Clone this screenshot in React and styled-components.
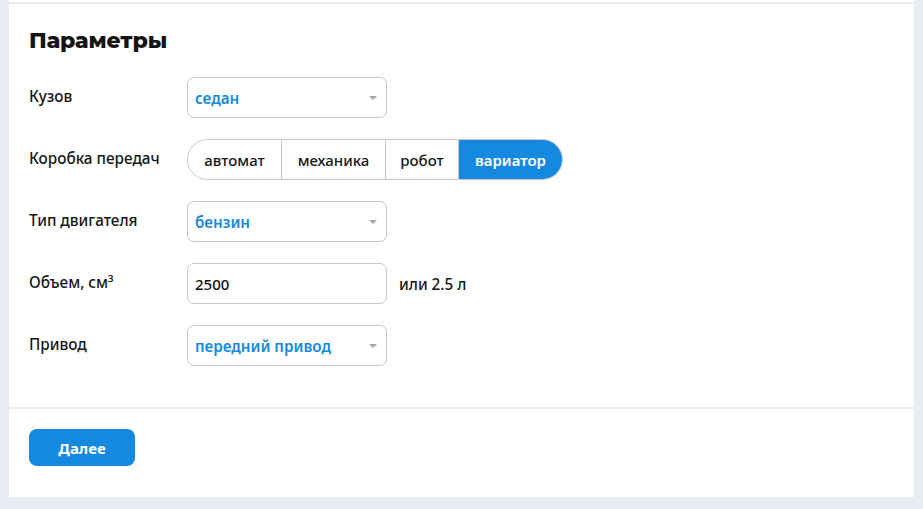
import React from "react";
import styled, { createGlobalStyle } from "styled-components";

const Global = createGlobalStyle`
  html, body { margin: 0; padding: 0; background: #e8edf4; }
  * { box-sizing: border-box; }
  body { font-family: "Noto Sans", "Open Sans", sans-serif; color: #1b1b1b; }
`;

const BLUE = "#1589e0";
const BORDER = "#c3c6cb";

const Page = styled.div`
  padding: 0 9px 12px 9px;
`;

const Panel = styled.div`
  background: #fff;
  padding-top: 2px;
`;

const Section = styled.section`
  border-top: 2px solid #e8edf4;
  padding: ${(p) => p.$pad};
`;

const Title = styled.h2`
  margin: 0 0 21px 0;
  font-family: "Montserrat", "Inter", sans-serif;
  font-weight: 800;
  font-size: 22px;
  line-height: 30px;
  letter-spacing: -0.1px;
  color: #141414;
`;

const Form = styled.div`
  display: flex;
  flex-direction: column;
  gap: 21px;
`;

const Row = styled.div`
  display: grid;
  grid-template-columns: 158px auto 1fr;
  align-items: center;
  height: 41px;
`;

const Label = styled.div`
  font-size: 15.3px;
  font-weight: 500;
  line-height: 20px;
  margin-top: -3px;
  color: #161616;
`;

const Select = styled.div`
  width: 200px;
  height: 41px;
  border: 1px solid ${BORDER};
  border-radius: 7px;
  display: flex;
  align-items: center;
  justify-content: space-between;
  padding: 0 8px 0 7px;
  font-size: 15.2px;
  font-weight: 600;
  color: ${BLUE};
`;

const Arrow = styled.span`
  width: 0;
  height: 0;
  border-left: 4px solid transparent;
  border-right: 4px solid transparent;
  border-top: 4px solid #a3a7ac;
  margin-right: 1px;
`;

const Input = styled.div`
  width: 200px;
  height: 41px;
  border: 1px solid ${BORDER};
  border-radius: 7px;
  display: flex;
  align-items: center;
  padding: 0 7px;
  font-size: 15px;
  font-weight: 500;
  color: #111;
`;

const Hint = styled.div`
  margin-left: 12px;
  font-size: 15.3px;
  font-weight: 500;
  color: #161616;
`;

const Segmented = styled.div`
  display: flex;
  height: 41px;
  border: 1px solid ${BORDER};
  border-radius: 21px;
  overflow: hidden;
`;

const Segment = styled.div`
  display: flex;
  align-items: center;
  justify-content: center;
  width: ${(p) => p.$w}px;
  font-size: 15px;
  font-weight: ${(p) => (p.$active ? 600 : 500)};
  color: ${(p) => (p.$active ? "#fff" : "#161616")};
  background: ${(p) => (p.$active ? BLUE : "#fff")};
  border-left: ${(p) => (p.$first ? "none" : `1px solid ${BORDER}`)};
`;

const Button = styled.button`
  width: 106px;
  height: 37px;
  border: none;
  border-radius: 8px;
  background: ${BLUE};
  color: #fff;
  font-family: "Noto Sans", "Open Sans", sans-serif;
  font-size: 15px;
  font-weight: 700;
  cursor: pointer;
`;

const gears = [
  { t: "автомат", w: 93 },
  { t: "механика", w: 104 },
  { t: "робот", w: 73 },
  { t: "вариатор", w: 104, active: true },
];

export default function App() {
  return (
    <>
      <Global />
      <Page>
        <Panel>
          <Section $pad="22px 20px 41px 20px">
            <Title>Параметры</Title>
            <Form>
              <Row>
                <Label>Кузов</Label>
                <Select>
                  седан
                  <Arrow />
                </Select>
              </Row>
              <Row>
                <Label>Коробка передач</Label>
                <Segmented>
                  {gears.map((g, i) => (
                    <Segment key={g.t} $w={g.w} $active={g.active} $first={i === 0}>
                      {g.t}
                    </Segment>
                  ))}
                </Segmented>
              </Row>
              <Row>
                <Label>Тип двигателя</Label>
                <Select>
                  бензин
                  <Arrow />
                </Select>
              </Row>
              <Row>
                <Label>Объем, см³</Label>
                <Input>2500</Input>
                <Hint>или 2.5 л</Hint>
              </Row>
              <Row>
                <Label>Привод</Label>
                <Select>
                  передний привод
                  <Arrow />
                </Select>
              </Row>
            </Form>
          </Section>
          <Section $pad="20px 20px 31px 20px">
            <Button>Далее</Button>
          </Section>
        </Panel>
      </Page>
    </>
  );
}
